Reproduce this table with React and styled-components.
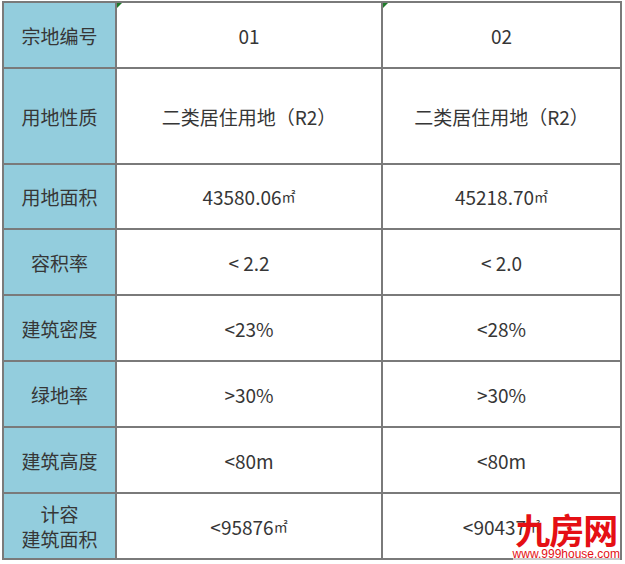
import React from "react";
import styled, { createGlobalStyle } from "styled-components";

const Global = createGlobalStyle`
  html, body { margin: 0; padding: 0; background: #fff; }
  body { font-family: "Noto Sans CJK SC", "Noto Sans", sans-serif; }
`;

const Page = styled.div`
  position: relative;
  width: 625px;
  height: 564px;
  padding: 1px 0 0 2px;
  box-sizing: border-box;
`;

const Table = styled.div`
  display: grid;
  grid-template-columns: 111px 264px 237px;
  grid-template-rows: 64px 94px 63px 64px 64px 64px 64px 64px;
  gap: 2px;
  padding: 2px;
  width: fit-content;
  background: #7a7a7a;
`;

const Cell = styled.div`
  position: relative;
  display: flex;
  align-items: center;
  justify-content: center;
  text-align: center;
  background: ${(p) => (p.$head ? "#93cddd" : "#ffffff")};
  color: #363636;
  font-size: 19px;
  line-height: 25px;
  font-family: "Noto Sans CJK SC", sans-serif;
`;

const Flag = styled.span`
  position: absolute;
  left: 0;
  top: 0;
  width: 0;
  height: 0;
  border-top: 5px solid #1e7a2a;
  border-right: 5px solid transparent;
`;

const Unit = styled.span`
  font-size: 14px;
  vertical-align: text-top;
`;

const Mark = styled.div`
  position: absolute;
  right: 5px;
  bottom: 3px;
  display: flex;
  flex-direction: column;
  align-items: center;
  color: #e50f14;
  pointer-events: none;
`;

const Logo = styled.div`
  font-family: "Noto Sans CJK SC", sans-serif;
  font-weight: 700;
  font-size: 35px;
  line-height: 38px;
  letter-spacing: -1px;
`;

const Url = styled.div`
  font-family: "Liberation Sans", Arial, sans-serif;
  font-size: 12px;
  line-height: 13px;
  background: rgba(255, 255, 255, 0.6);
`;

const rows = [
  ["宗地编号", "01", "02"],
  ["用地性质", "二类居住用地（R2）", "二类居住用地（R2）"],
  ["用地面积", <>43580.06<Unit>㎡</Unit></>, <>45218.70<Unit>㎡</Unit></>],
  ["容积率", "< 2.2", "< 2.0"],
  ["建筑密度", "<23%", "<28%"],
  ["绿地率", ">30%", ">30%"],
  ["建筑高度", "<80m", "<80m"],
  [<>计容<br />建筑面积</>, <>&lt;95876 <Unit>㎡</Unit></>, <>&lt;90437 <Unit>㎡</Unit></>],
];

export default function App() {
  return (
    <>
      <Global />
      <Page>
        <Table>
          {rows.map((r, i) => (
            <React.Fragment key={i}>
              <Cell $head>{r[0]}</Cell>
              <Cell>
                {i === 0 && <Flag />}
                {r[1]}
              </Cell>
              <Cell>
                {i === 0 && <Flag />}
                {r[2]}
              </Cell>
            </React.Fragment>
          ))}
        </Table>
        <Mark>
          <Logo>九房网</Logo>
          <Url>www.999house.com</Url>
        </Mark>
      </Page>
    </>
  );
}
